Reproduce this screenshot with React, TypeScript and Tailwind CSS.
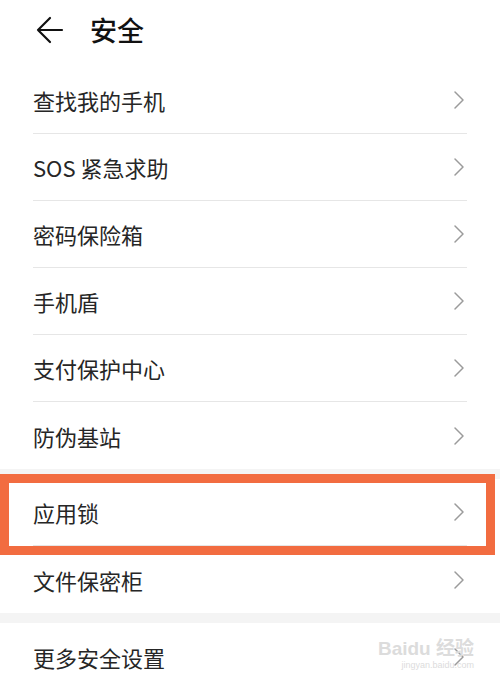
import { ReactNode } from 'react';

const font = { fontFamily: '"Noto Sans CJK SC", "Noto Sans", sans-serif' };

function Chevron() {
  return (
    <svg width="12" height="20" viewBox="0 0 12 20" fill="none" className="shrink-0">
      <polyline points="2,2 10,10 2,18" stroke="#9b9b9b" strokeWidth="1.5" strokeLinecap="round" strokeLinejoin="round" />
    </svg>
  );
}

function Row({ label, last = false, children }: { label: string; last?: boolean; children?: ReactNode }) {
  return (
    <div className="relative px-[33px]">
      <div className={`flex h-[67px] items-center justify-between pr-[2px] ${last ? '' : 'border-b border-[#e6e6e6]'}`}>
        <span className="text-[22px] text-[#262626] leading-none">{label}</span>
        <Chevron />
      </div>
      {children}
    </div>
  );
}

export default function App() {
  const mainItems = ['查找我的手机', 'SOS 紧急求助', '密码保险箱', '手机盾', '支付保护中心', '防伪基站'];

  return (
    <div className="w-[500px] h-[691px] bg-white overflow-hidden" style={font}>
      {/* Header */}
      <header className="flex h-[67px] items-center pl-[36px] pb-[8px]">
        <svg width="28" height="28" viewBox="0 0 28 28" fill="none">
          <path d="M26 14H2M14 2L2 14l12 12" stroke="#111" strokeWidth="2.2" strokeLinecap="round" strokeLinejoin="round" />
        </svg>
        <h1 className="ml-[26px] text-[27px] font-medium text-[#111] leading-none">安全</h1>
      </header>

      {/* Main group */}
      {mainItems.map((item, i) => (
        <Row key={item} label={item} last={i === mainItems.length - 1} />
      ))}

      <div className="h-[10px] bg-[#f4f4f4]" />

      {/* Lock group */}
      <div className="relative">
        <Row label="应用锁" />
        <Row label="文件保密柜" last />
        {/* annotation box */}
        <div className="absolute left-0 top-[-5px] w-[495px] h-[81px] border-[9px] border-[#f26c40]" />
      </div>

      <div className="h-[10px] bg-[#f4f4f4]" />

      <div className="relative">
        <Row label="更多安全设置" last />
        <div className="absolute right-[26px] top-[16px] text-right leading-none text-[#dcdcdc] select-none" style={{ fontFamily: '"Liberation Sans", "Noto Sans CJK SC", sans-serif' }}>
          <div className="text-[19px] font-bold">Baidu 经验</div>
          <div className="text-[9px] mt-[3px]">jingyan.baidu.com</div>
        </div>
      </div>
    </div>
  );
}
